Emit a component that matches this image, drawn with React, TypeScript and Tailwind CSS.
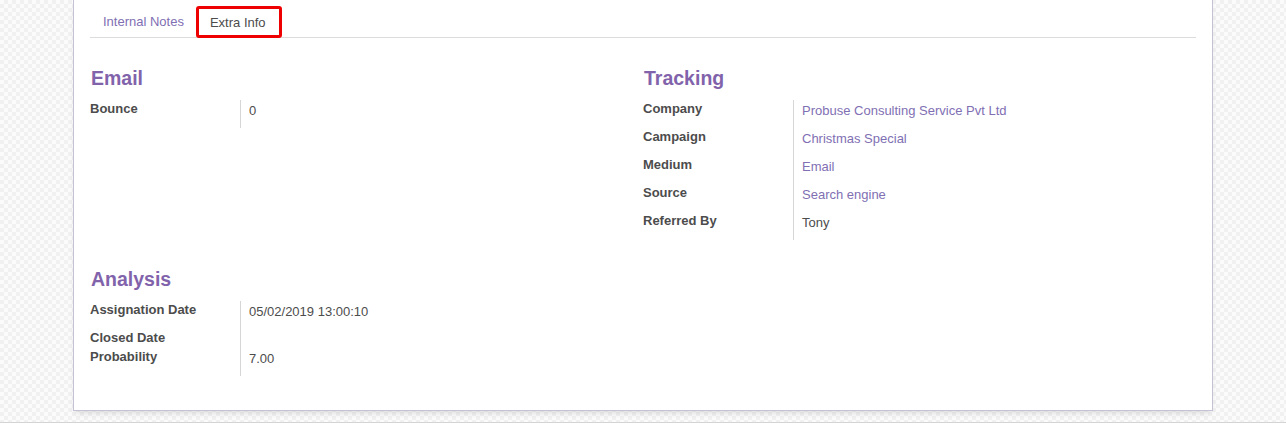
import React from "react";

type Field = { label: string; value?: string; link?: boolean; short?: boolean };

const email: Field[] = [{ label: "Bounce", value: "0" }];

const tracking: Field[] = [
  { label: "Company", value: "Probuse Consulting Service Pvt Ltd", link: true },
  { label: "Campaign", value: "Christmas Special", link: true },
  { label: "Medium", value: "Email", link: true },
  { label: "Source", value: "Search engine", link: true },
  { label: "Referred By", value: "Tony" },
];

const analysis: Field[] = [
  { label: "Assignation Date", value: "05/02/2019 13:00:10" },
  { label: "Closed Date", short: true },
  { label: "Probability", value: "7.00" },
];

function Group({ title, fields, top }: { title: string; fields: Field[]; top: string }) {
  return (
    <div className={top}>
      <h2 className="h-[26px] pl-px text-[19.5px] leading-[26px] font-bold text-[#8163ab]">{title}</h2>
      <div className="mt-[9px] flex flex-col">
        {fields.map((f) => (
          <div key={f.label} className={`flex ${f.short ? "h-[19px]" : "h-[28px]"}`}>
            <div className="w-[150px] shrink-0 text-[13px] leading-[18px] font-bold text-[#4c4c4c]">
              {f.label}
            </div>
            <div
              className={`flex-1 border-l border-[#d6d6d6] pl-[8px] pt-[2px] text-[13px] leading-[18px] ${
                f.link ? "text-[#7f6fb3]" : "text-[#4c4c4c]"
              }`}
            >
              {f.value}
            </div>
          </div>
        ))}
      </div>
    </div>
  );
}

export default function App() {
  return (
    <div className="font-['Liberation_Sans',Arial,sans-serif]">
      <div className="h-[423px] border-b border-[#d4d4d4] bg-[repeating-conic-gradient(#f1f1f1_0_25%,#fbfbfb_0_50%)] bg-[length:8px_8px]">
        <div className="mx-auto h-[411px] w-[1140px] border-x border-b border-[#c6c2d6] bg-white px-[16px] pt-[6px] shadow-[0_4px_6px_-2px_rgba(0,0,0,0.12)]">
          <div className="flex h-[32px] border-b border-[#dcdcdc]">
            <div className="flex items-center px-[13px] pt-[1px] text-[13px] text-[#7f6fb3]">Internal Notes</div>
            <div className="-mb-px ml-[-1px] flex items-center rounded-[3px] border-[3px] border-[#ee0000] pl-[11px] pr-[13px] pt-[1px] text-[13px] text-[#4c4c4c]">
              Extra Info
            </div>
          </div>
          <div className="grid grid-cols-2">
            <Group title="Email" fields={email} top="pt-[27px]" />
            <Group title="Tracking" fields={tracking} top="pt-[27px]" />
            <Group title="Analysis" fields={analysis} top="pt-[26px]" />
          </div>
        </div>
      </div>
    </div>
  );
}
